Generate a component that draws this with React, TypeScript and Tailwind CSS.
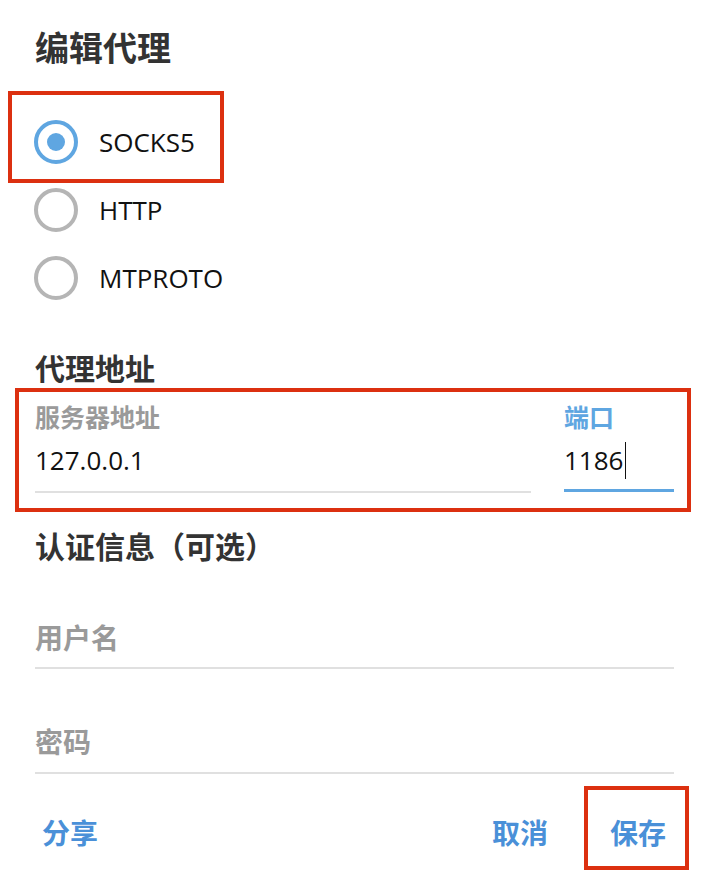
import React from "react";

const FONT = `font-['Open_Sans','Noto_Sans_CJK_SC',sans-serif]`;

function Radio({ label, checked }: { label: string; checked?: boolean }) {
  return (
    <div className="flex h-[68px] items-center">
      <div
        className={`ml-[-1px] flex h-[44px] w-[44px] items-center justify-center rounded-full border-[4px] ${
          checked ? "border-[#5fa6e1]" : "border-[#b5b5b5]"
        }`}
      >
        {checked && <div className="h-[18px] w-[18px] rounded-full bg-[#5fa6e1]" />}
      </div>
      <span className="ml-[21px] text-[26px] leading-[36px] text-[#111]">{label}</span>
    </div>
  );
}

export default function App() {
  return (
    <div className={`relative h-[892px] w-[714px] overflow-hidden bg-white pl-[35px] pr-[40px] ${FONT}`}>
      {/* 标题 */}
      <h1 className="mt-[28px] h-[40px] text-[34px] font-bold leading-[40px] text-[#333]">编辑代理</h1>

      {/* 代理类型 */}
      <div className="mt-[40px]">
        <Radio label="SOCKS5" checked />
        <Radio label="HTTP" />
        <Radio label="MTPROTO" />
      </div>

      {/* 代理地址 */}
      <h2 className="mt-[37px] h-[40px] text-[30px] font-bold leading-[40px] text-[#333]">代理地址</h2>
      <div className="mt-[13px] flex gap-[33px]">
        <div className="flex-1">
          <div className="h-[30px] text-[25px] font-bold leading-[30px] text-[#9a9a9a]">服务器地址</div>
          <div className="mt-[10px] h-[36px] text-[26px] leading-[36px] text-[#111]">127.0.0.1</div>
          <div className="mt-[13px] h-[2px] bg-[#e0e0e0]" />
        </div>
        <div className="w-[110px]">
          <div className="h-[30px] text-[25px] font-bold leading-[30px] text-[#5fa6e1]">端口</div>
          <div className="mt-[10px] flex h-[36px] items-center text-[26px] leading-[36px] text-[#111]">
            1186
            <span className="ml-[2px] h-[37px] w-px bg-[#111]" />
          </div>
          <div className="mt-[11px] h-[3px] bg-[#5fa6e1]" />
        </div>
      </div>

      {/* 认证信息 */}
      <h2 className="mt-[34px] h-[40px] text-[30px] font-bold leading-[40px] text-[#333]">认证信息（可选）</h2>
      <div className="mt-[51px] h-[40px] text-[28px] font-bold leading-[40px] text-[#9a9a9a]">用户名</div>
      <div className="mt-[9px] h-[2px] bg-[#e0e0e0]" />
      <div className="mt-[53px] h-[40px] text-[28px] font-bold leading-[40px] text-[#9a9a9a]">密码</div>
      <div className="mt-[10px] h-[2px] bg-[#e0e0e0]" />

      {/* 按钮 */}
      <div className="mt-[39px] flex h-[40px] items-center pl-[7px] pr-[8px] text-[28px] font-bold leading-[40px] text-[#4a90d8]">
        <span>分享</span>
        <span className="ml-auto">取消</span>
        <span className="ml-[62px]">保存</span>
      </div>

      {/* 标注框 */}
      <div className="pointer-events-none absolute left-[8px] top-[91px] h-[92px] w-[216px] border-[4px] border-[#dc3010]" />
      <div className="pointer-events-none absolute left-[15px] top-[388px] h-[124px] w-[676px] border-[4px] border-[#dc3010]" />
      <div className="pointer-events-none absolute left-[584px] top-[786px] h-[84px] w-[105px] border-[4px] border-[#dc3010]" />
    </div>
  );
}
